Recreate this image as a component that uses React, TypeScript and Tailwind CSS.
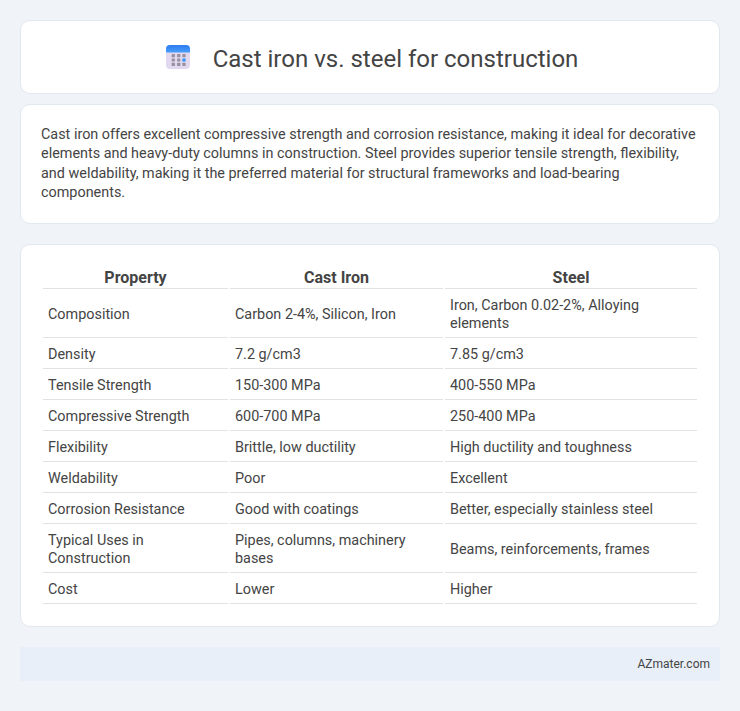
const rows: [string, string, string][] = [
  ['Composition', 'Carbon 2-4%, Silicon, Iron', 'Iron, Carbon 0.02-2%, Alloying elements'],
  ['Density', '7.2 g/cm3', '7.85 g/cm3'],
  ['Tensile Strength', '150-300 MPa', '400-550 MPa'],
  ['Compressive Strength', '600-700 MPa', '250-400 MPa'],
  ['Flexibility', 'Brittle, low ductility', 'High ductility and toughness'],
  ['Weldability', 'Poor', 'Excellent'],
  ['Corrosion Resistance', 'Good with coatings', 'Better, especially stainless steel'],
  ['Typical Uses in Construction', 'Pipes, columns, machinery bases', 'Beams, reinforcements, frames'],
  ['Cost', 'Lower', 'Higher'],
];

function CalendarIcon() {
  return (
    <svg width="24" height="24" viewBox="0 0 24 24" className="shrink-0">
      <defs>
        <linearGradient id="band" x1="0" y1="0" x2="0" y2="1">
          <stop offset="0" stopColor="#2f7bee" />
          <stop offset="1" stopColor="#47a0fb" />
        </linearGradient>
      </defs>
      <rect x="0" y="0" width="24" height="24" rx="4" fill="#e2d9f0" />
      <path d="M0 7.5V4a4 4 0 0 1 4-4h16a4 4 0 0 1 4 4v3.5z" fill="url(#band)" />
      {[5.7, 11.1, 16.4].map((x) =>
        [9.1, 13.4, 17.7].map((y) => (
          <rect key={`${x}-${y}`} x={x} y={y} width="3.2" height="3.2" rx="0.5" fill={x === 16.4 && y === 13.4 ? '#2f94f5' : '#97909f'} />
        ))
      )}
    </svg>
  );
}

export default function App() {
  return (
    <div className="min-h-[711px] bg-[#f0f4f9] px-5 pt-5 pb-[30px] font-['Roboto',sans-serif] text-[#444]">
      <div className="flex h-[74px] items-center justify-center gap-[23px] rounded-[10px] border border-[#e2e8f0] bg-white pl-1">
        <CalendarIcon />
        <h1 className="pt-1 text-[24px] leading-none font-normal text-[#444]">Cast iron vs. steel for construction</h1>
      </div>

      <div className="mt-[10px] rounded-[10px] border border-[#e2e8f0] bg-white px-5 py-5">
        <p className="text-[14.4px] leading-[19.44px]">
          Cast iron offers excellent compressive strength and corrosion resistance, making it ideal for decorative
          elements and heavy-duty columns in construction. Steel provides superior tensile strength, flexibility,
          and weldability, making it the preferred material for structural frameworks and load-bearing components.
        </p>
      </div>

      <div className="mt-5 rounded-[10px] border border-[#e2e8f0] bg-white px-5 py-5">
        <table className="w-full border-separate border-spacing-[2px] text-[14.4px] leading-[18px]">
          <thead>
            <tr>
              <th className="w-[185px] border-b border-[#e2e2e2] pt-[2px] pb-[1px] text-center text-[16px] leading-[18px] font-bold">Property</th>
              <th className="w-[213px] border-b border-[#e2e2e2] pt-[2px] pb-[1px] text-center text-[16px] leading-[18px] font-bold">Cast Iron</th>
              <th className="border-b border-[#e2e2e2] pt-[2px] pb-[1px] text-center text-[16px] leading-[18px] font-bold">Steel</th>
            </tr>
          </thead>
          <tbody>
            {rows.map((r) => (
              <tr key={r[0]}>
                {r.map((c, i) => (
                  <td key={i} className="border-b border-[#e2e2e2] px-[5px] pt-[6px] pb-[4px] align-middle font-normal">{c}</td>
                ))}
              </tr>
            ))}
          </tbody>
        </table>
      </div>

      <div className="mt-5 flex h-[34px] items-center justify-end bg-[#e8eff8] px-[10px] text-[12px]">AZmater.com</div>
    </div>
  );
}
